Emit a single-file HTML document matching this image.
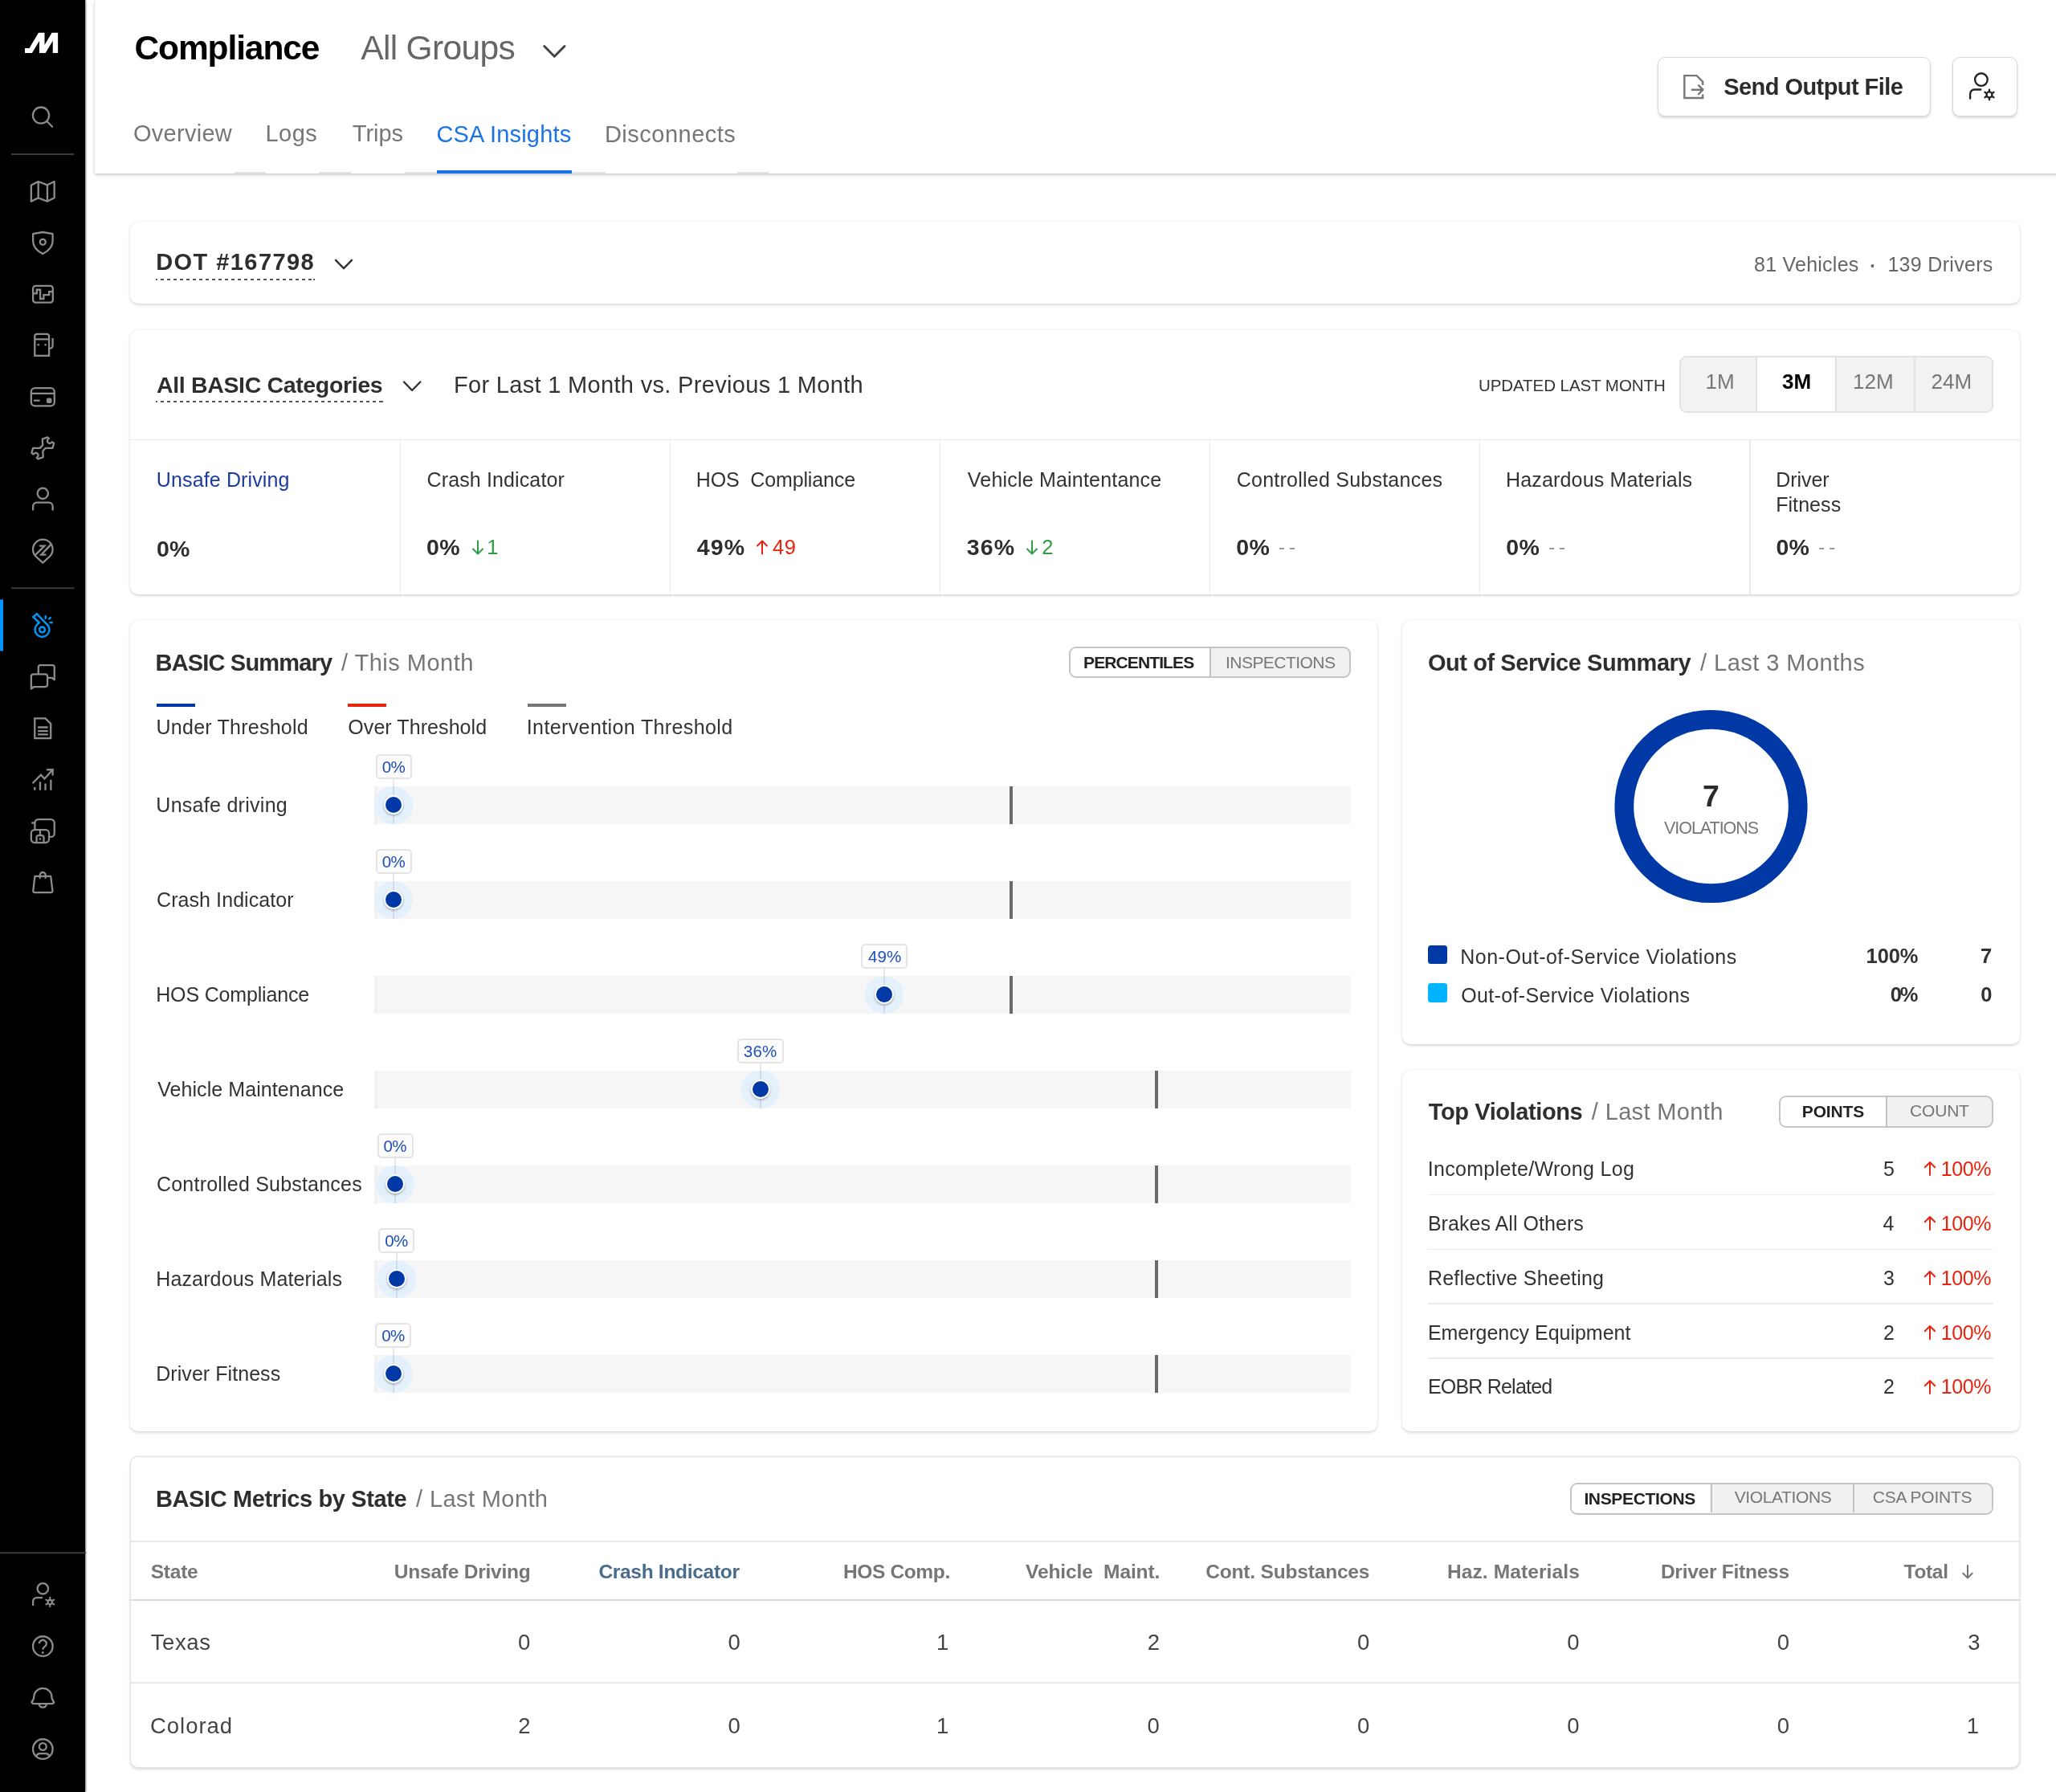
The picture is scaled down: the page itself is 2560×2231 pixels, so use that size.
<!DOCTYPE html>
<html lang="en"><head><meta charset="utf-8"><title>Compliance - CSA Insights</title><style>
*{margin:0;padding:0}
html,body{width:2560px;height:2231px;overflow:hidden;background:#fff}
body{position:relative;font-family:"Liberation Sans",sans-serif;-webkit-font-smoothing:antialiased}
.a{position:absolute}
.t{position:absolute;line-height:1;white-space:pre}
.sbsvg{position:absolute;left:0;top:0}
.txt{position:absolute;left:0;top:0;width:2560px;height:2231px;will-change:transform}
</style></head>
<body>
<nav class="a" style="left:0;top:0;width:106.3px;height:2231px;background:#000;box-shadow:0.5px 0 2px rgba(0,0,0,.55)"><svg class="sbsvg" width="107" height="2231" viewBox="0 0 107 2231" fill="none" stroke="#8c8c8c" stroke-width="2.3" stroke-linecap="round" stroke-linejoin="round">
<polygon fill="#fff" stroke="none" points="31,59.9 36.55,59.9 47.93,40.75 55.52,40.75 55.52,55.9 64.56,40.75 72.15,40.75 72.15,66 65.73,66 65.73,50.7 56.68,66 48.95,66 48.95,51 39.9,66 31,66"/>
<circle cx="51" cy="143.6" r="10.1"/><path d="M58.2 150.8L65.1 157.8"/>
<path d="M14 192H92.5M14 732.3H92.5" stroke="#3a3a3a" stroke-width="2" stroke-linecap="butt"/>
<path d="M0 1933.3H107" stroke="#3a3a3a" stroke-width="2" stroke-linecap="butt"/>
<path d="M38.84 230.6L47.68 226.05L58.93 230.34L67.64 226.05V246.15L58.93 250.7L47.68 246.4L38.84 250.7ZM47.68 226.05V246.4M58.93 230.34V250.7"/>
<path d="M53.3 289L65.6 291.1V300C65.6 307.2 60 312.6 53.3 316C46.6 312.6 41.1 307.2 41.1 300V291.1Z"/><circle cx="53.3" cy="301.3" r="3.5"/>
<rect x="41.1" y="355.8" width="24.7" height="20.9" rx="3.2"/><path d="M41.1 365.3H45.8V360.75H50.1V372H54.4V367.2H61.1V363.2H65.8" stroke-linejoin="miter"/>
<path d="M43.26 442.8V418.6a2.8 2.8 0 0 1 2.8-2.8H58.27a2.8 2.8 0 0 1 2.8 2.8V442.8ZM43.26 422.3H61.07M61.07 433.6h1.5a3 3 0 0 0 3-3V421.8" stroke-linejoin="miter"/><circle cx="47.8" cy="429.2" r="1.3" fill="#8c8c8c" stroke="none"/><circle cx="56.65" cy="429.2" r="1.3" fill="#8c8c8c" stroke="none"/>
<rect x="38.84" y="483.1" width="28.93" height="22.3" rx="4.6"/><path d="M38.84 489.8H67.77M42.9 498.7H48.7"/><rect x="58" y="495.45" width="6.4" height="6.45" rx="1.6" fill="#8c8c8c" stroke="none"/>
<path d="M53.20 554.14L52.77 546.59L59.20 544.31L60.86 545.97A3.08 3.08 0 1 0 64.71 550.29L67.10 551.81L65.36 557.84L56.79 557.84L53.30 561.59L53.73 569.14L47.30 571.42L45.64 569.76A3.08 3.08 0 1 0 41.79 565.45L39.40 563.92L41.14 557.89L49.71 557.89L53.20 554.14Z"/>
<circle cx="53.3" cy="614.34" r="6.65"/><path d="M41.1 635.5V630.3a4.7 4.7 0 0 1 4.7-4.7H60.9a4.7 4.7 0 0 1 4.7 4.7V635.5" stroke-linecap="butt"/>
<path d="M53.3 700.6L44.4 692.5A12.3 12.3 0 1 1 62.2 692.5Z"/><path d="M62.95 678.34L51.43 690.66H56.52M49.82 679.55H55.45L44.47 690.4" stroke-linejoin="miter"/>
<rect x="0" y="746.4" width="4" height="64" fill="#0095ff" stroke="none"/>
<g stroke="#0095f6" stroke-width="2.5"><path d="M48.75 774.96L41.38 768.13L45.8 764.24L58.5 777.26A8.97 8.97 0 1 1 46.07 777.64Z" stroke-linejoin="miter"/><circle cx="52.5" cy="783.93" r="3.4"/><path d="M56.79 767.15V769.65M61.29 770.37L62.71 769.09M62.53 774.96H64.71" stroke-linecap="round"/></g>
<path d="M47.8 838.8V830.6a2.5 2.5 0 0 1 2.5-2.5H65.27a2.5 2.5 0 0 1 2.5 2.5V846.3L64.3 843.8H59.5M38.84 857.6V842.06a2.7 2.7 0 0 1 2.7-2.7H56.37a2.7 2.7 0 0 1 2.7 2.7V852.33a2.7 2.7 0 0 1-2.7 2.7H42.3Z"/>
<path d="M43.26 894.4H56.5L63.2 900.95V919.03H43.26ZM47.1 905.5H59.7M47.1 910.06H59.7M47.1 914.3H59.7" stroke-linejoin="miter" stroke-linecap="butt"/>
<path d="M40.45 975.26L50.9 964.68L55.45 969.5L65.36 958.52M58.13 958.25H65.63V965.48M43.26 979.95V983.7M49.96 973.25V983.7M56.52 975.4V983.7M63.35 970.84V983.7" stroke-linejoin="miter" stroke-linecap="butt"/>
<path d="M43.4 1033V1024.6a4.5 4.5 0 0 1 4.5-4.5H63.27a4.5 4.5 0 0 1 4.5 4.5V1037.44a4.5 4.5 0 0 1-4.5 4.5H61.2M40.18 1024.5H43.2"/><rect x="38.84" y="1033.2" width="22.23" height="15.84" rx="4.2"/><path d="M49.96 1033.2V1039.9M45.54 1049V1042.5a2.4 2.4 0 0 1 2.4-2.4H52.1a2.4 2.4 0 0 1 2.4 2.4V1049"/><circle cx="49.96" cy="1044.6" r="1.3" fill="#8c8c8c" stroke="none"/>
<path d="M43.4 1090.94H63.2L65.4 1108.8Q65.6 1111.03 63.4 1111.03H43.3Q41.1 1111.03 41.3 1108.8ZM49.8 1093.75V1089.4a3.42 3.42 0 0 1 6.85 0V1093.75" stroke-linecap="butt"/>
<circle cx="53.3" cy="1977.8" r="6.7"/><path d="M41.1 1998.97V1993.76a4.7 4.7 0 0 1 4.7-4.7H53" stroke-linecap="butt"/>
<circle cx="62.28" cy="1994.55" r="2.70" stroke="#8c8c8c" stroke-width="2.10"/><path d="M62.28 1990.85L62.28 1988.85M59.08 1992.70L57.34 1991.70M59.08 1996.40L57.34 1997.40M62.28 1998.25L62.28 2000.25M65.48 1996.40L67.22 1997.40M65.48 1992.70L67.22 1991.70" stroke="#8c8c8c" stroke-width="2.10" stroke-linecap="round"/>
<circle cx="53.3" cy="2049.57" r="12.3"/><path d="M48.75 2046.2A4.55 4.45 0 1 1 55.6 2050.1Q53.3 2051.4 53.3 2053.8" stroke-linecap="butt"/><circle cx="53.3" cy="2057.5" r="1.4" fill="#8c8c8c" stroke="none"/>
<path d="M42.19 2113.6V2112.7a11.19 11.19 0 0 1 22.37 0V2113.6Q64.6 2115.2 67.2 2119.2Q66.4 2121.2 64 2121.2H42.7Q40.3 2121.2 39.4 2119.2Q42.1 2115.2 42.19 2113.6ZM48.75 2121.9a4.6 4.4 0 0 0 9.1 0"/>
<circle cx="53.3" cy="2177.57" r="12.3"/><circle cx="53.3" cy="2174.5" r="4.4"/><path d="M45 2186.4Q46.4 2183.07 49.6 2183.07H57Q60.2 2183.07 61.6 2186.4"/>
</svg></nav>
<div class="a hdr" style="left:117.60px;top:0.00px;width:2443.00px;height:216.00px;background:#fff;box-shadow:0 1px 3px rgba(30,40,50,.24),0 3px 6px rgba(30,40,50,.08);"></div>
<svg class="a" style="left:672px;top:50px" width="36" height="28" viewBox="0 0 36 28" fill="none" stroke="#444" stroke-width="3" stroke-linecap="round" stroke-linejoin="round"><path d="M5.7 7.5L18.3 20.2L31 7.5"/></svg>
<div class="a" style="left:544.00px;top:212.00px;width:168.00px;height:4.00px;background:#1a73e8"></div>
<div class="a" style="left:291.80px;top:214.00px;width:38.90px;height:2.00px;background:#e2e2e2"></div>
<div class="a" style="left:397.20px;top:214.00px;width:40.10px;height:2.00px;background:#e2e2e2"></div>
<div class="a" style="left:503.50px;top:214.00px;width:40.50px;height:2.00px;background:#e2e2e2"></div>
<div class="a" style="left:712.00px;top:214.00px;width:42.40px;height:2.00px;background:#e2e2e2"></div>
<div class="a" style="left:918.20px;top:214.00px;width:39.20px;height:2.00px;background:#e2e2e2"></div>
<div class="a btn" style="left:2064.00px;top:71.00px;width:340.00px;height:73.50px;background:#fff;border:1px solid #d9d9d9;border-radius:9px;box-shadow:0 2px 3px rgba(0,0,0,.16);box-sizing:border-box"></div>
<svg class="a" style="left:2090px;top:88px" width="40" height="40" viewBox="0 0 40 40" fill="none" stroke="#777" stroke-width="2.4" stroke-linejoin="miter" stroke-linecap="butt"><path d="M30.16 16.89V13.68L22.59 6.11H7.32V33.96H30.16V30.37" stroke-linecap="round"/><path d="M16.82 23.69H30.42M25.03 18.3L30.42 23.69L25.03 29.08" stroke-linecap="round" stroke-linejoin="round"/></svg>
<div class="a btn" style="left:2430.50px;top:71.00px;width:81.00px;height:73.50px;background:#fff;border:1px solid #d9d9d9;border-radius:9px;box-shadow:0 2px 3px rgba(0,0,0,.16);box-sizing:border-box"></div>
<svg class="a" style="left:2440px;top:80px" width="60" height="56" viewBox="0 0 60 56" fill="none" stroke="#222" stroke-width="2.4" stroke-linecap="round" stroke-linejoin="round"><circle cx="26.9" cy="19.06" r="7.8"/><path d="M13.1 42.5V36.9a5.35 5.35 0 0 1 5.35-5.35H26.25"/><circle cx="36.97" cy="37.97" r="3.50" stroke="#222" stroke-width="2.30"/><path d="M36.97 33.37L36.97 31.57M32.99 35.67L31.43 34.77M32.99 40.27L31.43 41.17M36.97 42.57L36.97 44.37M40.95 40.27L42.51 41.17M40.95 35.67L42.51 34.77" stroke="#222" stroke-width="2.30" stroke-linecap="round"/></svg>
<div class="a card" style="left:162.30px;top:276.30px;width:2352.50px;height:102.00px;background:#fff;border-radius:10px;box-shadow:0 0 2px rgba(30,40,50,.07),0 1.5px 3.5px rgba(30,40,50,.17);"></div>
<div class="a" style="left:194.30px;top:347.20px;width:197.30px;height:2.00px;background:repeating-linear-gradient(90deg,#555 0 4px,transparent 4px 8px);background-position:-2px 0"></div>
<svg class="a" style="left:412px;top:318px" width="32" height="24" viewBox="0 0 32 24" fill="none" stroke="#333" stroke-width="2.4" stroke-linecap="round" stroke-linejoin="round"><path d="M6 5.8L16 16.2L26 5.8"/></svg>
<div class="a card" style="left:162.30px;top:410.50px;width:2352.50px;height:329.50px;background:#fff;border-radius:10px;box-shadow:0 0 2px rgba(30,40,50,.07),0 1.5px 3.5px rgba(30,40,50,.17);"></div>
<div class="a" style="left:194.30px;top:498.80px;width:282.50px;height:2.00px;background:repeating-linear-gradient(90deg,#555 0 4px,transparent 4px 8px);background-position:-2px 0"></div>
<svg class="a" style="left:497px;top:469px" width="32" height="24" viewBox="0 0 32 24" fill="none" stroke="#333" stroke-width="2.4" stroke-linecap="round" stroke-linejoin="round"><path d="M6 6.5L16.1 17L26.3 6.5"/></svg>
<div class="a seg" style="left:2090.70px;top:442.80px;width:391.50px;height:70.80px;background:#f2f2f2;border:2px solid #e2e2e2;border-radius:9px;box-sizing:border-box;overflow:hidden"><div class="a" style="left:93.6px;top:0;width:100.6px;height:67px;background:#fff;border-left:2px solid #e2e2e2;border-right:2px solid #e2e2e2;box-sizing:border-box"></div><div class="a" style="left:290.1px;top:0;width:2px;height:67px;background:#e2e2e2"></div></div>
<div class="a" style="left:162.30px;top:546.50px;width:2352.50px;height:1.50px;background:#ececec"></div>
<div class="a" style="left:497.67px;top:547.00px;width:1.50px;height:193.00px;background:#ececec"></div>
<div class="a" style="left:833.74px;top:547.00px;width:1.50px;height:193.00px;background:#ececec"></div>
<div class="a" style="left:1169.81px;top:547.00px;width:1.50px;height:193.00px;background:#ececec"></div>
<div class="a" style="left:1505.89px;top:547.00px;width:1.50px;height:193.00px;background:#ececec"></div>
<div class="a" style="left:1841.96px;top:547.00px;width:1.50px;height:193.00px;background:#ececec"></div>
<div class="a" style="left:2178.03px;top:547.00px;width:1.50px;height:193.00px;background:#ececec"></div>
<svg class="a" style="left:585.8px;top:671.3px" width="18" height="22" viewBox="0 0 18 22" fill="none" stroke="#2e9e44" stroke-width="2" stroke-linecap="round" stroke-linejoin="round"><path d="M9 2.5V18.5M3 12.5L9 18.5L15 12.5"/></svg>
<svg class="a" style="left:940.2px;top:671.3px" width="18" height="22" viewBox="0 0 18 22" fill="none" stroke="#e8230f" stroke-width="2" stroke-linecap="round" stroke-linejoin="round"><path d="M9 18.5V2.5M3 8.5L9 2.5L15 8.5"/></svg>
<svg class="a" style="left:1276.3px;top:671.3px" width="18" height="22" viewBox="0 0 18 22" fill="none" stroke="#2e9e44" stroke-width="2" stroke-linecap="round" stroke-linejoin="round"><path d="M9 2.5V18.5M3 12.5L9 18.5L15 12.5"/></svg>
<div class="a card" style="left:161.80px;top:772.30px;width:1553.00px;height:1009.70px;background:#fff;border-radius:10px;box-shadow:0 0 2px rgba(30,40,50,.07),0 1.5px 3.5px rgba(30,40,50,.17);"></div>
<div class="a tog" style="left:1330.80px;top:804.50px;width:351.20px;height:39.30px;background:#f1f1f1;border:2px solid #c4c4c4;border-radius:9px;box-sizing:border-box;overflow:hidden"><div class="a" style="left:0;top:0;width:174.6px;height:35.3px;background:#fff"></div><div class="a" style="left:173.6px;top:0;width:2px;height:35.3px;background:#c4c4c4"></div></div>
<div class="a" style="left:195.00px;top:876.00px;width:48.00px;height:4.00px;background:#0039a6"></div>
<div class="a" style="left:433.00px;top:876.00px;width:48.00px;height:4.00px;background:#e8230f"></div>
<div class="a" style="left:656.60px;top:876.00px;width:48.00px;height:4.00px;background:#767676"></div>
<div class="a" style="left:466.30px;top:978.70px;width:1216.00px;height:47.40px;background:#f6f6f6;border-left:4.5px solid #f1f1f1;box-sizing:border-box"></div>
<div class="a" style="left:1256.70px;top:978.70px;width:4.00px;height:47.40px;background:#6a6a6a"></div>
<div class="a" style="left:466.10px;top:978.70px;width:48.00px;height:47.40px;background:#e4f1fd;border-radius:50%"></div>
<div class="a" style="left:489.10px;top:969.40px;width:2.00px;height:56.70px;background:rgba(0,0,0,.085)"></div>
<div class="a" style="left:480.10px;top:992.40px;width:20.00px;height:20.00px;background:#0039a6;border-radius:50%;box-shadow:0 0 0 1.9px #fff,0 1.5px 3px 2px rgba(0,0,0,.28)"></div>
<div class="a" style="left:467.60px;top:938.50px;width:45.00px;height:31.40px;background:#fcfcfc;border:2px solid #e4e4e4;border-radius:5px;box-sizing:border-box"></div>
<div class="a" style="left:466.30px;top:1096.70px;width:1216.00px;height:47.40px;background:#f6f6f6;border-left:4.5px solid #f1f1f1;box-sizing:border-box"></div>
<div class="a" style="left:1256.70px;top:1096.70px;width:4.00px;height:47.40px;background:#6a6a6a"></div>
<div class="a" style="left:466.10px;top:1096.70px;width:48.00px;height:47.40px;background:#e4f1fd;border-radius:50%"></div>
<div class="a" style="left:489.10px;top:1087.40px;width:2.00px;height:56.70px;background:rgba(0,0,0,.085)"></div>
<div class="a" style="left:480.10px;top:1110.40px;width:20.00px;height:20.00px;background:#0039a6;border-radius:50%;box-shadow:0 0 0 1.9px #fff,0 1.5px 3px 2px rgba(0,0,0,.28)"></div>
<div class="a" style="left:467.60px;top:1056.50px;width:45.00px;height:31.40px;background:#fcfcfc;border:2px solid #e4e4e4;border-radius:5px;box-sizing:border-box"></div>
<div class="a" style="left:466.30px;top:1214.70px;width:1216.00px;height:47.40px;background:#f6f6f6;border-left:4.5px solid #f1f1f1;box-sizing:border-box"></div>
<div class="a" style="left:1256.70px;top:1214.70px;width:4.00px;height:47.40px;background:#6a6a6a"></div>
<div class="a" style="left:1077.40px;top:1214.70px;width:48.00px;height:47.40px;background:#e4f1fd;border-radius:50%"></div>
<div class="a" style="left:1100.40px;top:1205.40px;width:2.00px;height:56.70px;background:rgba(0,0,0,.085)"></div>
<div class="a" style="left:1091.40px;top:1228.40px;width:20.00px;height:20.00px;background:#0039a6;border-radius:50%;box-shadow:0 0 0 1.9px #fff,0 1.5px 3px 2px rgba(0,0,0,.28)"></div>
<div class="a" style="left:1072.40px;top:1174.50px;width:58.00px;height:31.40px;background:#fcfcfc;border:2px solid #e4e4e4;border-radius:5px;box-sizing:border-box"></div>
<div class="a" style="left:466.30px;top:1332.70px;width:1216.00px;height:47.40px;background:#f6f6f6;border-left:4.5px solid #f1f1f1;box-sizing:border-box"></div>
<div class="a" style="left:1438.20px;top:1332.70px;width:4.00px;height:47.40px;background:#6a6a6a"></div>
<div class="a" style="left:922.50px;top:1332.70px;width:48.00px;height:47.40px;background:#e4f1fd;border-radius:50%"></div>
<div class="a" style="left:945.50px;top:1323.40px;width:2.00px;height:56.70px;background:rgba(0,0,0,.085)"></div>
<div class="a" style="left:936.50px;top:1346.40px;width:20.00px;height:20.00px;background:#0039a6;border-radius:50%;box-shadow:0 0 0 1.9px #fff,0 1.5px 3px 2px rgba(0,0,0,.28)"></div>
<div class="a" style="left:917.50px;top:1292.50px;width:58.00px;height:31.40px;background:#fcfcfc;border:2px solid #e4e4e4;border-radius:5px;box-sizing:border-box"></div>
<div class="a" style="left:466.30px;top:1450.70px;width:1216.00px;height:47.40px;background:#f6f6f6;border-left:4.5px solid #f1f1f1;box-sizing:border-box"></div>
<div class="a" style="left:1438.20px;top:1450.70px;width:4.00px;height:47.40px;background:#6a6a6a"></div>
<div class="a" style="left:468.00px;top:1450.70px;width:48.00px;height:47.40px;background:#e4f1fd;border-radius:50%"></div>
<div class="a" style="left:491.00px;top:1441.40px;width:2.00px;height:56.70px;background:rgba(0,0,0,.085)"></div>
<div class="a" style="left:482.00px;top:1464.40px;width:20.00px;height:20.00px;background:#0039a6;border-radius:50%;box-shadow:0 0 0 1.9px #fff,0 1.5px 3px 2px rgba(0,0,0,.28)"></div>
<div class="a" style="left:469.50px;top:1410.50px;width:45.00px;height:31.40px;background:#fcfcfc;border:2px solid #e4e4e4;border-radius:5px;box-sizing:border-box"></div>
<div class="a" style="left:466.30px;top:1568.70px;width:1216.00px;height:47.40px;background:#f6f6f6;border-left:4.5px solid #f1f1f1;box-sizing:border-box"></div>
<div class="a" style="left:1438.20px;top:1568.70px;width:4.00px;height:47.40px;background:#6a6a6a"></div>
<div class="a" style="left:469.60px;top:1568.70px;width:48.00px;height:47.40px;background:#e4f1fd;border-radius:50%"></div>
<div class="a" style="left:492.60px;top:1559.40px;width:2.00px;height:56.70px;background:rgba(0,0,0,.085)"></div>
<div class="a" style="left:483.60px;top:1582.40px;width:20.00px;height:20.00px;background:#0039a6;border-radius:50%;box-shadow:0 0 0 1.9px #fff,0 1.5px 3px 2px rgba(0,0,0,.28)"></div>
<div class="a" style="left:471.10px;top:1528.50px;width:45.00px;height:31.40px;background:#fcfcfc;border:2px solid #e4e4e4;border-radius:5px;box-sizing:border-box"></div>
<div class="a" style="left:466.30px;top:1686.70px;width:1216.00px;height:47.40px;background:#f6f6f6;border-left:4.5px solid #f1f1f1;box-sizing:border-box"></div>
<div class="a" style="left:1438.20px;top:1686.70px;width:4.00px;height:47.40px;background:#6a6a6a"></div>
<div class="a" style="left:465.70px;top:1686.70px;width:48.00px;height:47.40px;background:#e4f1fd;border-radius:50%"></div>
<div class="a" style="left:488.70px;top:1677.40px;width:2.00px;height:56.70px;background:rgba(0,0,0,.085)"></div>
<div class="a" style="left:479.70px;top:1700.40px;width:20.00px;height:20.00px;background:#0039a6;border-radius:50%;box-shadow:0 0 0 1.9px #fff,0 1.5px 3px 2px rgba(0,0,0,.28)"></div>
<div class="a" style="left:467.20px;top:1646.50px;width:45.00px;height:31.40px;background:#fcfcfc;border:2px solid #e4e4e4;border-radius:5px;box-sizing:border-box"></div>
<div class="a card" style="left:1746.00px;top:772.30px;width:768.60px;height:527.70px;background:#fff;border-radius:10px;box-shadow:0 0 2px rgba(30,40,50,.07),0 1.5px 3.5px rgba(30,40,50,.17);"></div>
<svg class="a" style="left:2000px;top:874px" width="260" height="260" viewBox="0 0 260 260"><circle cx="130.5" cy="130" r="108.2" fill="none" stroke="#0039a6" stroke-width="23.8"/></svg>
<div class="a" style="left:1778.40px;top:1176.60px;width:24.00px;height:23.60px;background:#0039a6;border-radius:3.5px"></div>
<div class="a" style="left:1778.40px;top:1224.30px;width:24.00px;height:23.60px;background:#00b4ff;border-radius:3.5px"></div>
<div class="a card" style="left:1746.00px;top:1332.30px;width:768.60px;height:449.50px;background:#fff;border-radius:10px;box-shadow:0 0 2px rgba(30,40,50,.07),0 1.5px 3.5px rgba(30,40,50,.17);"></div>
<div class="a tog" style="left:2214.80px;top:1364.00px;width:267.00px;height:39.60px;background:#f1f1f1;border:2px solid #c4c4c4;border-radius:9px;box-sizing:border-box;overflow:hidden"><div class="a" style="left:0;top:0;width:132.5px;height:35.6px;background:#fff"></div><div class="a" style="left:131.5px;top:0;width:2px;height:35.6px;background:#c4c4c4"></div></div>
<svg class="a" style="left:2393.5px;top:1444.0px" width="18" height="22" viewBox="0 0 18 22" fill="none" stroke="#e8230f" stroke-width="2" stroke-linecap="round" stroke-linejoin="round"><path d="M9 19V3M2.8 9.2L9 3L15.2 9.2"/></svg>
<div class="a" style="left:1778.40px;top:1486.60px;width:703.30px;height:1.50px;background:#ececec"></div>
<svg class="a" style="left:2393.5px;top:1511.9px" width="18" height="22" viewBox="0 0 18 22" fill="none" stroke="#e8230f" stroke-width="2" stroke-linecap="round" stroke-linejoin="round"><path d="M9 19V3M2.8 9.2L9 3L15.2 9.2"/></svg>
<div class="a" style="left:1778.40px;top:1554.50px;width:703.30px;height:1.50px;background:#ececec"></div>
<svg class="a" style="left:2393.5px;top:1579.8px" width="18" height="22" viewBox="0 0 18 22" fill="none" stroke="#e8230f" stroke-width="2" stroke-linecap="round" stroke-linejoin="round"><path d="M9 19V3M2.8 9.2L9 3L15.2 9.2"/></svg>
<div class="a" style="left:1778.40px;top:1622.40px;width:703.30px;height:1.50px;background:#ececec"></div>
<svg class="a" style="left:2393.5px;top:1647.7px" width="18" height="22" viewBox="0 0 18 22" fill="none" stroke="#e8230f" stroke-width="2" stroke-linecap="round" stroke-linejoin="round"><path d="M9 19V3M2.8 9.2L9 3L15.2 9.2"/></svg>
<div class="a" style="left:1778.40px;top:1690.30px;width:703.30px;height:1.50px;background:#ececec"></div>
<svg class="a" style="left:2393.5px;top:1715.6px" width="18" height="22" viewBox="0 0 18 22" fill="none" stroke="#e8230f" stroke-width="2" stroke-linecap="round" stroke-linejoin="round"><path d="M9 19V3M2.8 9.2L9 3L15.2 9.2"/></svg>
<div class="a card" style="left:161.80px;top:1813.40px;width:2353.40px;height:387.60px;background:#fff;border-radius:10px;box-shadow:0 0 2px rgba(30,40,50,.07),0 1.5px 3.5px rgba(30,40,50,.17);border:1px solid #e4e4e4;box-sizing:border-box;"></div>
<div class="a tog" style="left:1955.00px;top:1846.20px;width:527.00px;height:39.70px;background:#f1f1f1;border:2px solid #c4c4c4;border-radius:9px;box-sizing:border-box;overflow:hidden"><div class="a" style="left:0;top:0;width:172px;height:35px;background:#fff"></div><div class="a" style="left:173.0px;top:0;width:2px;height:35px;background:#c4c4c4"></div><div class="a" style="left:349.5px;top:0;width:2px;height:35px;background:#c4c4c4"></div></div>
<div class="a" style="left:162.30px;top:1918.20px;width:2352.40px;height:1.50px;background:#e8e8e8"></div>
<div class="a" style="left:162.30px;top:1991.00px;width:2352.40px;height:2.00px;background:#dedede"></div>
<div class="a" style="left:162.30px;top:2094.00px;width:2352.40px;height:1.50px;background:#e8e8e8"></div>
<svg class="a" style="left:2441px;top:1946px" width="18" height="22" viewBox="0 0 18 22" fill="none" stroke="#767676" stroke-width="2" stroke-linecap="round" stroke-linejoin="round"><path d="M9 3V18.5M3.3 12.8L9 18.5L14.7 12.8"/></svg>
<div class="txt">
<span class="t" style="left:167.46px;top:38.52px;font-size:42.50px;color:#000;letter-spacing:-1.101px;font-weight:700;">Compliance</span>
<span class="t" style="left:449.22px;top:38.52px;font-size:42.50px;color:#666;letter-spacing:-0.667px;">All Groups</span>
<span class="t" style="left:166.03px;top:152.15px;font-size:29.00px;color:#767676;letter-spacing:0.263px;">Overview</span>
<span class="t" style="left:330.43px;top:152.15px;font-size:29.00px;color:#767676;letter-spacing:0.510px;">Logs</span>
<span class="t" style="left:438.85px;top:152.15px;font-size:29.00px;color:#767676;letter-spacing:-0.069px;">Trips</span>
<span class="t" style="left:543.43px;top:153.35px;font-size:29.00px;color:#1a73e8;letter-spacing:0.153px;">CSA Insights</span>
<span class="t" style="left:752.93px;top:153.35px;font-size:29.00px;color:#767676;letter-spacing:0.496px;">Disconnects</span>
<span class="t" style="left:2146.27px;top:94.45px;font-size:29.00px;color:#2b2b2b;letter-spacing:-0.559px;font-weight:700;">Send Output File</span>
<span class="t" style="left:194.26px;top:312.45px;font-size:29.00px;color:#2e2e2e;letter-spacing:1.426px;font-weight:700;">DOT #167798</span>
<span class="t" style="left:2184.02px;top:317.34px;font-size:25.00px;color:#666;letter-spacing:0.241px;">81 Vehicles</span>
<span class="t" style="left:2328.95px;top:323.85px;font-size:14.00px;color:#666;">•</span>
<span class="t" style="left:2350.40px;top:317.34px;font-size:25.00px;color:#666;letter-spacing:0.308px;">139 Drivers</span>
<span class="t" style="left:195.05px;top:464.87px;font-size:28.50px;color:#2e2e2e;letter-spacing:-0.351px;font-weight:700;">All BASIC Categories</span>
<span class="t" style="left:564.92px;top:464.75px;font-size:29.00px;color:#333;letter-spacing:0.325px;">For Last 1 Month vs. Previous 1 Month</span>
<span class="t" style="left:1840.90px;top:469.65px;font-size:20.50px;color:#333;letter-spacing:-0.058px;">UPDATED LAST MONTH</span>
<span class="t" style="left:2123.52px;top:462.29px;font-size:26.00px;color:#777;">1M</span>
<span class="t" style="left:2219.01px;top:462.29px;font-size:26.00px;color:#000;font-weight:700;">3M</span>
<span class="t" style="left:2307.09px;top:462.29px;font-size:26.00px;color:#777;">12M</span>
<span class="t" style="left:2404.62px;top:462.29px;font-size:26.00px;color:#777;">24M</span>
<span class="t" style="left:194.83px;top:584.64px;font-size:25.00px;color:#1c3c9c;letter-spacing:0.129px;">Unsafe Driving</span>
<span class="t" style="left:531.56px;top:584.64px;font-size:25.00px;color:#333;letter-spacing:0.125px;">Crash Indicator</span>
<span class="t" style="left:866.85px;top:584.64px;font-size:25.00px;color:#333;letter-spacing:-0.131px;">HOS  Compliance</span>
<span class="t" style="left:1204.87px;top:584.64px;font-size:25.00px;color:#333;letter-spacing:0.192px;">Vehicle Maintentance</span>
<span class="t" style="left:1539.78px;top:584.64px;font-size:25.00px;color:#333;letter-spacing:0.236px;">Controlled Substances</span>
<span class="t" style="left:1875.07px;top:584.64px;font-size:25.00px;color:#333;letter-spacing:0.155px;">Hazardous Materials</span>
<span class="t" style="left:2211.16px;top:584.64px;font-size:25.00px;color:#333;letter-spacing:-0.030px;">Driver</span>
<span class="t" style="left:2211.16px;top:615.84px;font-size:25.00px;color:#333;letter-spacing:0.070px;">Fitness</span>
<span class="t" style="left:194.97px;top:668.67px;font-size:28.50px;color:#2e2e2e;letter-spacing:0.287px;font-weight:700;">0%</span>
<span class="t" style="left:531.04px;top:666.67px;font-size:28.50px;color:#2e2e2e;letter-spacing:0.287px;font-weight:700;">0%</span>
<span class="t" style="left:606.13px;top:669.21px;font-size:25.50px;color:#2e9e44;letter-spacing:0.600px;">1</span>
<span class="t" style="left:867.81px;top:666.67px;font-size:28.50px;color:#2e2e2e;letter-spacing:1.070px;font-weight:700;">49%</span>
<span class="t" style="left:961.96px;top:669.21px;font-size:25.50px;color:#e8230f;letter-spacing:0.600px;">49</span>
<span class="t" style="left:1203.66px;top:666.67px;font-size:28.50px;color:#2e2e2e;letter-spacing:1.181px;font-weight:700;">36%</span>
<span class="t" style="left:1297.33px;top:669.21px;font-size:25.50px;color:#2e9e44;letter-spacing:0.600px;">2</span>
<span class="t" style="left:1539.26px;top:666.67px;font-size:28.50px;color:#2e2e2e;letter-spacing:0.287px;font-weight:700;">0%</span>
<span class="t" style="left:1591.87px;top:668.64px;font-size:25.00px;color:#999;letter-spacing:4.573px;">--</span>
<span class="t" style="left:1875.33px;top:666.67px;font-size:28.50px;color:#2e2e2e;letter-spacing:0.287px;font-weight:700;">0%</span>
<span class="t" style="left:1927.95px;top:668.64px;font-size:25.00px;color:#999;letter-spacing:4.573px;">--</span>
<span class="t" style="left:2211.40px;top:666.67px;font-size:28.50px;color:#2e2e2e;letter-spacing:0.287px;font-weight:700;">0%</span>
<span class="t" style="left:2264.02px;top:668.64px;font-size:25.00px;color:#999;letter-spacing:4.573px;">--</span>
<span class="t" style="left:193.52px;top:810.65px;font-size:29.00px;color:#2e2e2e;letter-spacing:-0.823px;font-weight:700;">BASIC Summary</span>
<span class="t" style="left:424.98px;top:810.65px;font-size:29.00px;color:#767676;letter-spacing:0.490px;">/ This Month</span>
<span class="t" style="left:1349.05px;top:814.32px;font-size:21.00px;color:#222;letter-spacing:-0.890px;font-weight:700;">PERCENTILES</span>
<span class="t" style="left:1526.01px;top:814.32px;font-size:21.00px;color:#777;letter-spacing:-0.536px;">INSPECTIONS</span>
<span class="t" style="left:194.55px;top:893.34px;font-size:25.00px;color:#333;letter-spacing:0.239px;">Under Threshold</span>
<span class="t" style="left:433.29px;top:893.34px;font-size:25.00px;color:#333;letter-spacing:0.078px;">Over Threshold</span>
<span class="t" style="left:655.77px;top:893.34px;font-size:25.00px;color:#333;letter-spacing:0.385px;">Intervention Threshold</span>
<span class="t" style="left:194.34px;top:990.34px;font-size:25.00px;color:#333;letter-spacing:0.278px;">Unsafe driving</span>
<span class="t" style="left:475.65px;top:945.35px;font-size:20.50px;color:#1f4fb8;letter-spacing:-0.600px;">0%</span>
<span class="t" style="left:195.00px;top:1108.34px;font-size:25.00px;color:#333;letter-spacing:0.082px;">Crash Indicator</span>
<span class="t" style="left:475.65px;top:1063.35px;font-size:20.50px;color:#1f4fb8;letter-spacing:-0.600px;">0%</span>
<span class="t" style="left:194.22px;top:1226.34px;font-size:25.00px;color:#333;letter-spacing:-0.169px;">HOS Compliance</span>
<span class="t" style="left:1080.91px;top:1181.35px;font-size:20.50px;color:#1f4fb8;letter-spacing:0.200px;">49%</span>
<span class="t" style="left:196.16px;top:1344.34px;font-size:25.00px;color:#333;letter-spacing:0.077px;">Vehicle Maintenance</span>
<span class="t" style="left:925.86px;top:1299.35px;font-size:20.50px;color:#1f4fb8;letter-spacing:0.200px;">36%</span>
<span class="t" style="left:195.00px;top:1462.34px;font-size:25.00px;color:#333;letter-spacing:0.206px;">Controlled Substances</span>
<span class="t" style="left:477.55px;top:1417.35px;font-size:20.50px;color:#1f4fb8;letter-spacing:-0.600px;">0%</span>
<span class="t" style="left:194.22px;top:1580.34px;font-size:25.00px;color:#333;letter-spacing:0.137px;">Hazardous Materials</span>
<span class="t" style="left:479.15px;top:1535.35px;font-size:20.50px;color:#1f4fb8;letter-spacing:-0.600px;">0%</span>
<span class="t" style="left:194.22px;top:1698.34px;font-size:25.00px;color:#333;letter-spacing:0.057px;">Driver Fitness</span>
<span class="t" style="left:475.25px;top:1653.35px;font-size:20.50px;color:#1f4fb8;letter-spacing:-0.600px;">0%</span>
<span class="t" style="left:1777.97px;top:810.65px;font-size:29.00px;color:#2e2e2e;letter-spacing:-0.439px;font-weight:700;">Out of Service Summary</span>
<span class="t" style="left:2117.03px;top:810.65px;font-size:29.00px;color:#767676;letter-spacing:0.457px;">/ Last 3 Months</span>
<span class="t" style="left:2120.09px;top:972.56px;font-size:37.50px;color:#2b2b2b;font-weight:700;">7</span>
<span class="t" style="left:2071.96px;top:1020.60px;font-size:21.50px;color:#777;letter-spacing:-1.028px;">VIOLATIONS</span>
<span class="t" style="left:1818.28px;top:1178.54px;font-size:25.00px;color:#333;letter-spacing:0.488px;">Non-Out-of-Service Violations</span>
<span class="t" style="left:2323.54px;top:1178.11px;font-size:25.50px;color:#333;letter-spacing:-0.081px;font-weight:700;">100%</span>
<span class="t" style="left:2465.99px;top:1178.11px;font-size:25.50px;color:#333;font-weight:700;">7</span>
<span class="t" style="left:1819.15px;top:1226.64px;font-size:25.00px;color:#333;letter-spacing:0.366px;">Out-of-Service Violations</span>
<span class="t" style="left:2353.74px;top:1226.21px;font-size:25.50px;color:#333;letter-spacing:-2.075px;font-weight:700;">0%</span>
<span class="t" style="left:2466.21px;top:1226.21px;font-size:25.50px;color:#333;font-weight:700;">0</span>
<span class="t" style="left:1778.83px;top:1369.95px;font-size:29.00px;color:#2e2e2e;letter-spacing:-0.408px;font-weight:700;">Top Violations</span>
<span class="t" style="left:1981.83px;top:1369.95px;font-size:29.00px;color:#767676;letter-spacing:0.356px;">/ Last Month</span>
<span class="t" style="left:2243.80px;top:1373.02px;font-size:21.00px;color:#222;letter-spacing:-0.151px;font-weight:700;">POINTS</span>
<span class="t" style="left:2378.08px;top:1371.92px;font-size:21.00px;color:#777;letter-spacing:-0.202px;">COUNT</span>
<span class="t" style="left:1777.63px;top:1442.84px;font-size:25.00px;color:#333;letter-spacing:0.326px;">Incomplete/Wrong Log</span>
<span class="t" style="left:2344.91px;top:1442.84px;font-size:25.00px;color:#333;">5</span>
<span class="t" style="left:2416.83px;top:1442.84px;font-size:25.00px;color:#e8230f;letter-spacing:-0.403px;">100%</span>
<span class="t" style="left:1777.88px;top:1510.74px;font-size:25.00px;color:#333;letter-spacing:0.048px;">Brakes All Others</span>
<span class="t" style="left:2344.60px;top:1510.74px;font-size:25.00px;color:#333;">4</span>
<span class="t" style="left:2416.83px;top:1510.74px;font-size:25.00px;color:#e8230f;letter-spacing:-0.403px;">100%</span>
<span class="t" style="left:1777.88px;top:1578.64px;font-size:25.00px;color:#333;letter-spacing:0.206px;">Reflective Sheeting</span>
<span class="t" style="left:2344.96px;top:1578.64px;font-size:25.00px;color:#333;">3</span>
<span class="t" style="left:2416.83px;top:1578.64px;font-size:25.00px;color:#e8230f;letter-spacing:-0.403px;">100%</span>
<span class="t" style="left:1777.88px;top:1646.54px;font-size:25.00px;color:#333;letter-spacing:-0.024px;">Emergency Equipment</span>
<span class="t" style="left:2345.12px;top:1646.54px;font-size:25.00px;color:#333;">2</span>
<span class="t" style="left:2416.83px;top:1646.54px;font-size:25.00px;color:#e8230f;letter-spacing:-0.403px;">100%</span>
<span class="t" style="left:1777.88px;top:1714.44px;font-size:25.00px;color:#333;letter-spacing:-0.788px;">EOBR Related</span>
<span class="t" style="left:2345.12px;top:1714.44px;font-size:25.00px;color:#333;">2</span>
<span class="t" style="left:2416.83px;top:1714.44px;font-size:25.00px;color:#e8230f;letter-spacing:-0.403px;">100%</span>
<span class="t" style="left:194.01px;top:1852.35px;font-size:29.00px;color:#2e2e2e;letter-spacing:-0.384px;font-weight:700;">BASIC Metrics by State</span>
<span class="t" style="left:518.08px;top:1852.35px;font-size:29.00px;color:#767676;letter-spacing:0.393px;">/ Last Month</span>
<span class="t" style="left:1972.40px;top:1855.12px;font-size:21.00px;color:#222;letter-spacing:-0.353px;font-weight:700;">INSPECTIONS</span>
<span class="t" style="left:2159.71px;top:1853.22px;font-size:21.00px;color:#777;letter-spacing:-0.380px;">VIOLATIONS</span>
<span class="t" style="left:2331.73px;top:1853.22px;font-size:21.00px;color:#777;letter-spacing:-0.245px;">CSA POINTS</span>
<span class="t" style="left:187.68px;top:1944.76px;font-size:24.50px;color:#767676;letter-spacing:-0.208px;font-weight:700;">State</span>
<span class="t" style="left:490.81px;top:1944.76px;font-size:24.50px;color:#767676;letter-spacing:-0.227px;font-weight:700;">Unsafe Driving</span>
<span class="t" style="left:745.38px;top:1944.76px;font-size:24.50px;color:#4a6c8c;letter-spacing:-0.293px;font-weight:700;">Crash Indicator</span>
<span class="t" style="left:1049.94px;top:1944.76px;font-size:24.50px;color:#767676;letter-spacing:-0.357px;font-weight:700;">HOS Comp.</span>
<span class="t" style="left:1277.12px;top:1944.76px;font-size:24.50px;color:#767676;letter-spacing:-0.118px;font-weight:700;">Vehicle  Maint.</span>
<span class="t" style="left:1501.28px;top:1944.76px;font-size:24.50px;color:#767676;letter-spacing:-0.185px;font-weight:700;">Cont. Substances</span>
<span class="t" style="left:1801.94px;top:1944.76px;font-size:24.50px;color:#767676;letter-spacing:0.113px;font-weight:700;">Haz. Materials</span>
<span class="t" style="left:2067.94px;top:1944.76px;font-size:24.50px;color:#767676;letter-spacing:-0.256px;font-weight:700;">Driver Fitness</span>
<span class="t" style="left:2370.61px;top:1944.76px;font-size:24.50px;color:#767676;letter-spacing:-0.341px;font-weight:700;">Total</span>
<span class="t" style="left:187.77px;top:2031.02px;font-size:27.50px;color:#444;letter-spacing:0.602px;">Texas</span>
<span class="t" style="left:644.98px;top:2031.02px;font-size:27.50px;color:#444;">0</span>
<span class="t" style="left:906.38px;top:2031.02px;font-size:27.50px;color:#444;">0</span>
<span class="t" style="left:1166.05px;top:2031.02px;font-size:27.50px;color:#444;">1</span>
<span class="t" style="left:1428.79px;top:2031.02px;font-size:27.50px;color:#444;">2</span>
<span class="t" style="left:1689.88px;top:2031.02px;font-size:27.50px;color:#444;">0</span>
<span class="t" style="left:1951.28px;top:2031.02px;font-size:27.50px;color:#444;">0</span>
<span class="t" style="left:2212.68px;top:2031.02px;font-size:27.50px;color:#444;">0</span>
<span class="t" style="left:2450.32px;top:2031.02px;font-size:27.50px;color:#444;">3</span>
<span class="t" style="left:186.99px;top:2135.32px;font-size:27.50px;color:#444;letter-spacing:0.968px;">Colorad</span>
<span class="t" style="left:645.29px;top:2135.32px;font-size:27.50px;color:#444;">2</span>
<span class="t" style="left:906.38px;top:2135.32px;font-size:27.50px;color:#444;">0</span>
<span class="t" style="left:1166.05px;top:2135.32px;font-size:27.50px;color:#444;">1</span>
<span class="t" style="left:1428.48px;top:2135.32px;font-size:27.50px;color:#444;">0</span>
<span class="t" style="left:1689.88px;top:2135.32px;font-size:27.50px;color:#444;">0</span>
<span class="t" style="left:1951.28px;top:2135.32px;font-size:27.50px;color:#444;">0</span>
<span class="t" style="left:2212.68px;top:2135.32px;font-size:27.50px;color:#444;">0</span>
<span class="t" style="left:2448.85px;top:2135.32px;font-size:27.50px;color:#444;">1</span>
</div>
</body></html>
